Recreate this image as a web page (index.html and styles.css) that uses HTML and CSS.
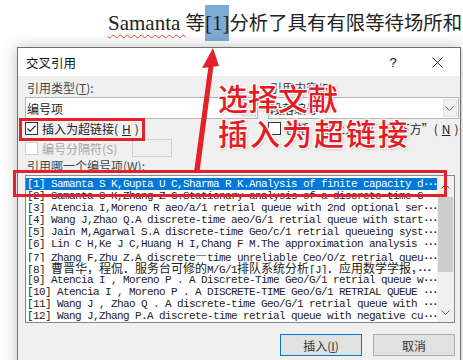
FILE: index.html
```html
<!doctype html>
<html lang="zh-CN">
<head>
    <meta charset="UTF-8">
    <title>交叉引用</title>
    <link rel="stylesheet" href="styles.css">
</head>
<body>
    <p class="doc"><span class="typo">Samanta&nbsp;</span><span class="zh">等</span><span class="hl">[1]</span><span class="zh">分析了具有有限等待场所和</span></p>

    <div class="dialog">
        <div class="title">
            <span class="name">交叉引用</span>
            <span class="help">?</span>
            <span class="close">
                <svg width="11" height="11" viewBox="0 0 11 11"><path d="M0.5 0.5L10.5 10.5M10.5 0.5L0.5 10.5" stroke="#222" stroke-width="1"/></svg>
            </span>
        </div>
        <div class="body">
            <div class="cols">
                <div class="col">
                    <label class="lbl">引用类型(<u>T</u>):</label>
                    <div class="combo"><span class="val">编号项</span><i class="drop"></i></div>
                    <label class="check"><i class="box"><svg width="11" height="11" viewBox="0 0 11 11"><path d="M1.5 5.5L4.2 8.2L9.6 2.6" fill="none" stroke="#222" stroke-width="1.1"/></svg></i>插入为超链接(<u>H</u>)</label>
                    <div class="sep">
                        <label class="check off"><i class="box"></i>编号分隔符(S)</label>
                        <i class="field"></i>
                    </div>
                </div>
                <div class="col">
                    <label class="lbl">引用内容(<u>R</u>):</label>
                    <div class="combo"><span class="val">段落编号</span><i class="drop"><svg width="9" height="5" viewBox="0 0 9 5"><path d="M0.5 0.5L4.5 4.5L8.5 0.5" fill="none" stroke="#666" stroke-width="1"/></svg></i></div>
                    <label class="check"><i class="box"></i>包括“见上方”/“见下方”(<u>N</u>)</label>
                </div>
            </div>
            <label class="lbl">引用哪一个编号项(<u>W</u>):</label>
            <div class="list">
                <ul class="items">
                    <li class="sel">[1] Samanta S K,Gupta U C,Sharma R K.Analysis of finite capacity d<span class="more">···</span></li>
                    <li>[2] Samanta S K,Zhang Z G.Stationary analysis of a discrete-time G<span class="more">···</span></li>
                    <li>[3] Atencia I,Moreno R aeo/a/1 retrial queue with 2nd optional ser<span class="more">···</span></li>
                    <li>[4] Wang J,Zhao Q.A discrete-time aeo/G/1 retrial queue with start<span class="more">···</span></li>
                    <li>[5] Jain M,Agarwal S.A discrete-time Geo/c/1 retrial queueing syst<span class="more">···</span></li>
                    <li>[6] Lin C H,Ke J C,Huang H I,Chang F M.The approximation analysis <span class="more">···</span></li>
                    <li>[7] Zhang F,Zhu Z.A discrete<span class="zh">—</span>time unreliable Ceo/O/z retrial queu<span class="more">···</span></li>
                    <li>[8] <span class="zh">曹晋华，程侃．服务台可修的</span>M/G/1<span class="zh">排队系统分析</span>[J]<span class="zh">．应用数学学报，</span><span class="more">···</span></li>
                    <li>[9] Atencia I , Moreno P . A Discrete-Time Geo/G/1 retrial queue w<span class="more">···</span></li>
                    <li>[10] Atencia I , Moreno P . A DISCRETE-TIME Geo/G/1 RETRIAL QUEUE <span class="more">···</span></li>
                    <li>[11] Wang J , Zhao Q . A discrete-time Geo/G/1 retrial queue with <span class="more">···</span></li>
                    <li>[12] Wang J,Zhang P.A discrete-time retrial queue with negative cu<span class="more">···</span></li>
                </ul>
                <div class="scroll">
                    <span class="step"><svg width="9" height="5" viewBox="0 0 9 5"><path d="M0.5 4.5L4.5 0.5L8.5 4.5" fill="none" stroke="#606060" stroke-width="1"/></svg></span>
                    <span class="thumb"></span>
                    <span class="step down"><svg width="9" height="5" viewBox="0 0 9 5"><path d="M0.5 0.5L4.5 4.5L8.5 0.5" fill="none" stroke="#606060" stroke-width="1"/></svg></span>
                </div>
            </div>
            <div class="buttons">
                <button class="btn primary">插入(<u>I</u>)</button>
                <button class="btn">取消</button>
            </div>
        </div>
    </div>

    <!-- 标注 -->
    <div class="mark mark-check"></div>
    <div class="mark mark-row"></div>
    <svg class="arrow" width="463" height="360" viewBox="0 0 463 360">
        <polygon points="194,172 199.5,172 213.5,66 208.5,66" fill="#e2212b"/>
        <polygon points="213,48 202,68 219,66" fill="#e2212b"/>
    </svg>
    <div class="note">
        <div>选择文献</div>
        <div class="wide">插入为超链接</div>
    </div>
</body>
</html>
```

FILE: styles.css
```css
* {
    margin: 0;
    padding: 0;
    box-sizing: border-box;
}
body {
    width: 463px;
    height: 360px;
    overflow: hidden;
    position: relative;
    background: #fff;
    font-family: "Noto Sans CJK SC", "Liberation Sans", sans-serif;
}
.doc {
    height: 40px;
    padding: 4px 0 0 108px;
    font: 21px/36px "Liberation Serif", "Noto Sans CJK SC", serif;
    color: #222;
    white-space: nowrap;
}
.doc .zh {
    font-size: 19.4px;
    font-family: "Noto Sans CJK SC", sans-serif;
}
.typo {
    text-decoration: underline wavy #e04a3c;
    text-decoration-thickness: 1px;
    text-underline-offset: 4px;
}
.hl {
    display: inline-block;
    background-color: #7eaad6;
}
.dialog {
    position: absolute;
    left: 17px;
    top: 47px;
    width: 444px;
    height: 330px;
    border: 1px solid #6f6f6f;
    background-color: #f0f0f0;
    box-shadow: 0 0 14px rgba(0, 0, 0, .25);
    font-size: 12px;
    color: #444;
}
.title {
    height: 28px;
    padding-left: 8px;
    display: flex;
    align-items: center;
    background-color: #fff;
    font-size: 12.5px;
    color: #111;
}
.title .name {
    flex: 1;
}
.help {
    width: 30px;
    margin-right: 6px;
    text-align: center;
    font: 13px "Liberation Sans", sans-serif;
}
.close {
    width: 46px;
    display: flex;
    justify-content: center;
}
.body {
    padding: 4px 5px 0 7px;
}
.cols {
    display: grid;
    grid-template-columns: 233px 1fr;
    column-gap: 10px;
}
.lbl {
    display: block;
    height: 16px;
    line-height: 16px;
    padding-left: 2px;
    margin-bottom: 1px;
}
.combo {
    height: 22px;
    display: flex;
    align-items: center;
    padding-left: 1px;
    border: 1px solid #b4b4b4;
    background-color: #fff;
    color: #222;
}
.combo .val {
    flex: 1;
}
.drop {
    width: 14px;
    height: 18px;
    margin-right: 1px;
    display: flex;
    align-items: center;
    justify-content: center;
    background-color: #f0f0f0;
    border: 1px solid #e0e0e0;
}
.check {
    height: 18px;
    display: flex;
    align-items: center;
    gap: 4px;
    color: #222;
    white-space: nowrap;
}
.box {
    width: 13px;
    height: 13px;
    display: flex;
    align-items: center;
    justify-content: center;
    border: 1px solid #333;
    background-color: #fff;
}
.sep {
    height: 20px;
    margin-top: 1px;
    display: flex;
    align-items: center;
}
.sep .check {
    width: 107px;
}
.check.off {
    color: #a6a6a6;
}
.check.off .box {
    border-color: #cfcfcf;
}
.field {
    width: 40px;
    height: 18px;
    border: 1px solid #cfcfcf;
    background-color: #f0f0f0;
}
.list {
    height: 148px;
    display: flex;
    border: 1px solid #828790;
    background-color: #fff;
}
.items {
    flex: 1;
    padding-top: 2px;
    list-style: none;
    overflow: hidden;
    font: 11px/12px "Liberation Mono", monospace;
    letter-spacing: -0.6px;
    color: #222;
    white-space: nowrap;
}
.items li {
    height: 12px;
    padding-left: 1px;
    overflow: hidden;
}
.items li.sel {
    background-color: #0078d7;
    color: #fff;
}
.items .zh {
    font-size: 12px;
    font-family: "Noto Sans CJK SC", sans-serif;
    letter-spacing: 0;
}
.items .more {
    letter-spacing: -2.2px;
    font-weight: bold;
}
.scroll {
    width: 17px;
    display: flex;
    flex-direction: column;
    background-color: #f0f0f0;
}
.step {
    height: 20px;
    display: flex;
    align-items: center;
    justify-content: center;
}
.step.down {
    margin-top: auto;
}
.thumb {
    height: 75px;
    margin: 1px 1px 0;
    background-color: #cdcdcd;
}
.buttons {
    margin-top: 11px;
    display: flex;
    justify-content: flex-end;
    gap: 11px;
}
.btn {
    width: 82px;
    height: 22px;
    border: 1px solid #adadad;
    background-color: #e1e1e1;
    font: 12px "Noto Sans CJK SC", sans-serif;
    color: #333;
}
.btn.primary {
    border-color: #0078d7;
}
.mark {
    position: absolute;
    border: 3px solid #e2212b;
}
.mark-check {
    left: 19px;
    top: 118px;
    width: 126px;
    height: 23px;
}
.mark-row {
    left: 13px;
    top: 170px;
    width: 434px;
    height: 27px;
}
.arrow {
    position: absolute;
    left: 0;
    top: 0;
}
.note {
    position: absolute;
    left: 218px;
    top: 80px;
    font: 500 30px/35px "Noto Sans CJK SC", sans-serif;
    color: #e31d26;
    white-space: nowrap;
    text-shadow: 1px 1px 0 #fff, -1px -1px 0 #fff, 1px -1px 0 #fff, -1px 1px 0 #fff, 0 0 3px #fff, 1px 1px 3px rgba(0, 0, 0, .35);
}
.note .wide {
    letter-spacing: 2px;
}
```
